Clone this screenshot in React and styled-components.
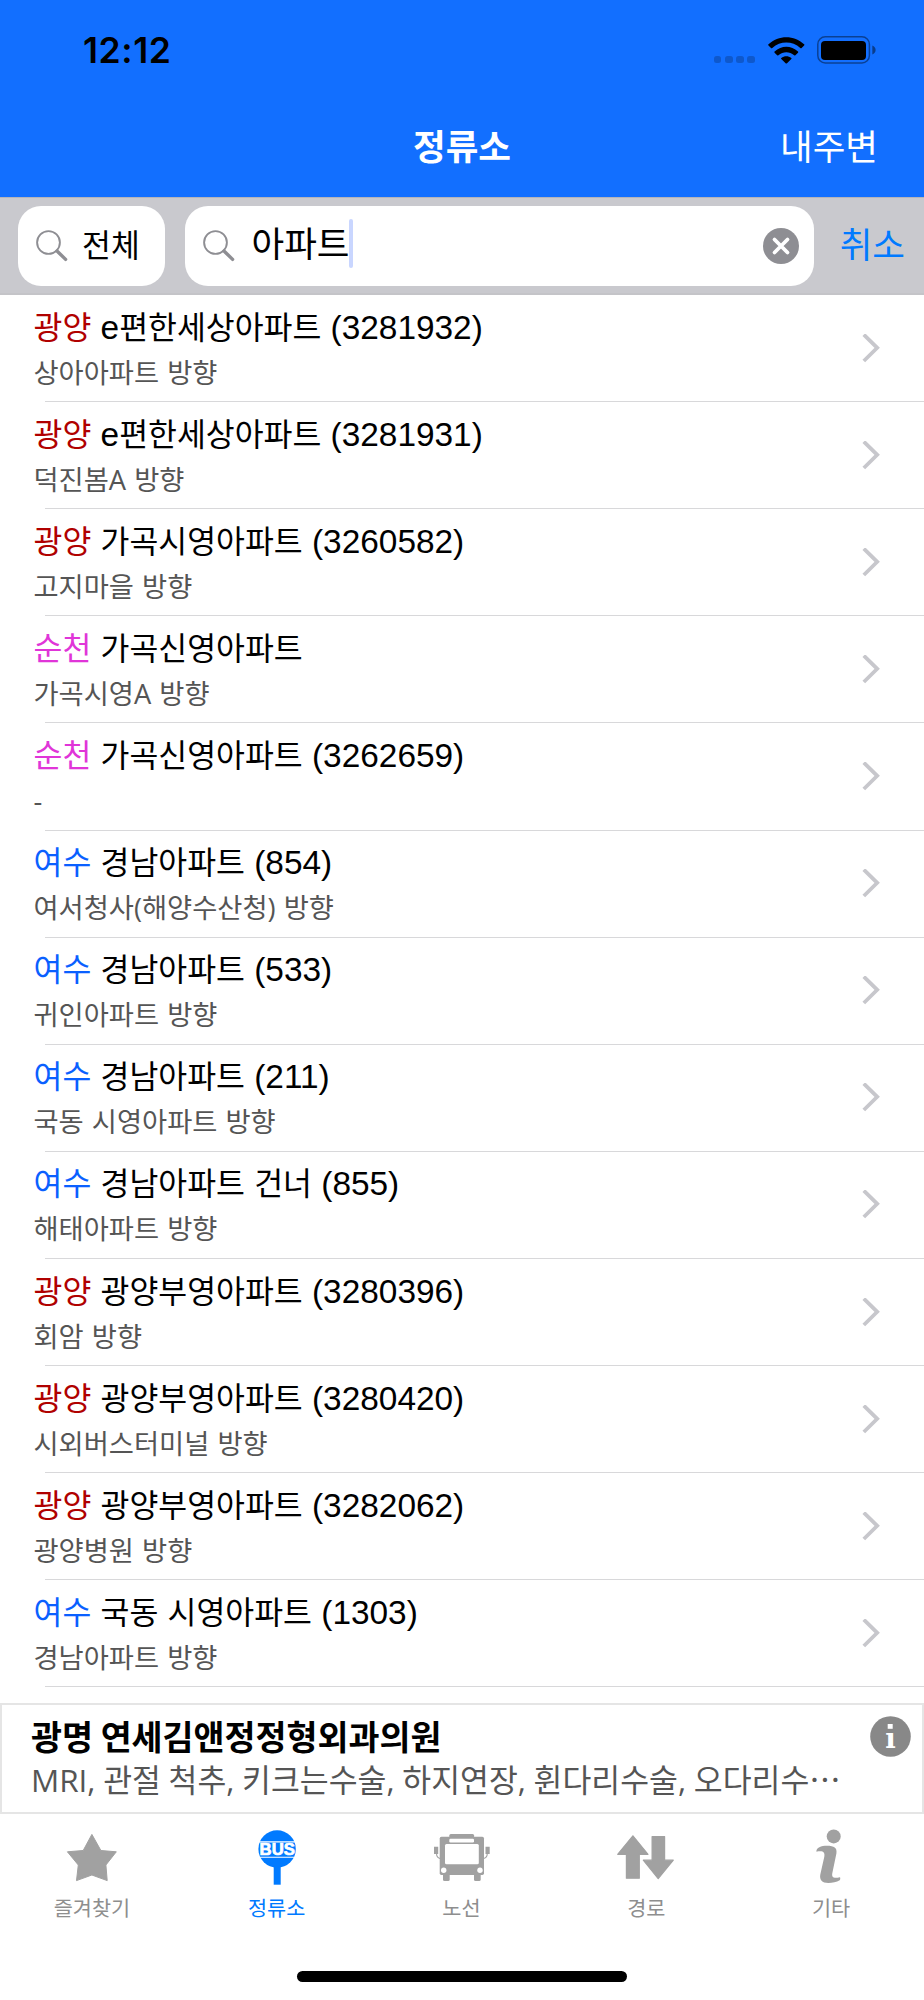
import React from 'react'
import styled, { createGlobalStyle } from 'styled-components'

const stops = [
  { city: '광양', name: 'e편한세상아파트 (3281932)', dir: '상아아파트 방향' },
  { city: '광양', name: 'e편한세상아파트 (3281931)', dir: '덕진봄A 방향' },
  { city: '광양', name: '가곡시영아파트 (3260582)', dir: '고지마을 방향' },
  { city: '순천', name: '가곡신영아파트', dir: '가곡시영A 방향' },
  { city: '순천', name: '가곡신영아파트 (3262659)', dir: '-' },
  { city: '여수', name: '경남아파트 (854)', dir: '여서청사(해양수산청) 방향' },
  { city: '여수', name: '경남아파트 (533)', dir: '귀인아파트 방향' },
  { city: '여수', name: '경남아파트 (211)', dir: '국동 시영아파트 방향' },
  { city: '여수', name: '경남아파트 건너 (855)', dir: '해태아파트 방향' },
  { city: '광양', name: '광양부영아파트 (3280396)', dir: '회암 방향' },
  { city: '광양', name: '광양부영아파트 (3280420)', dir: '시외버스터미널 방향' },
  { city: '광양', name: '광양부영아파트 (3282062)', dir: '광양병원 방향' },
  { city: '여수', name: '국동 시영아파트 (1303)', dir: '경남아파트 방향' },
]

const cityColors = {
  광양: '#b00000',
  순천: '#e035d8',
  여수: '#0a60ff',
}

// latin runs are set a little larger than the hangul around them
function Mixed({ text }) {
  return text
    .split(/([\x20-\x7e]+)/)
    .filter(Boolean)
    .map((part, i) =>
      /[\x20-\x7e]/.test(part) ? <Latin key={i}>{part}</Latin> : part
    )
}

function SearchIcon() {
  return (
    <svg width="32" height="32" viewBox="0 0 32 32" fill="none" stroke="#8e8e93">
      <circle cx="12.5" cy="12.5" r="11.4" strokeWidth="1.9" />
      <path d="M21 21l8.6 8.4" strokeWidth="3.4" strokeLinecap="round" />
    </svg>
  )
}

function StatusBar() {
  return (
    <Status>
      <Time>12:12</Time>
      <StatusIcons>
        <Dots><i /><i /><i /><i /></Dots>
        <svg width="37" height="27" viewBox="0 0 37 27">
          <path d="M.5 7.2C10.4-2.2 26.2-2.2 36.1 7.2q.7.6 0 1.3l-2.5 2.5q-.6.6-1.3 0c-8-7.2-20-7.2-28 0q-.7.6-1.3 0L.5 8.5q-.7-.7 0-1.3z" />
          <path d="M6.6 14.5c6.8-6.4 16.6-6.4 23.4 0q.6.6 0 1.2l-2.6 2.6q-.6.5-1.2 0c-4.6-4.1-11.2-4.1-15.8 0q-.6.5-1.2 0l-2.6-2.6q-.6-.6 0-1.2z" />
          <path d="M13.3 21c2.9-2.5 7.1-2.5 10 0q.6.6 0 1.1l-4.3 4.1q-.7.6-1.4 0l-4.3-4.1q-.6-.5 0-1.1z" />
        </svg>
        <svg width="59" height="28" viewBox="0 0 59 28">
          <rect x=".8" y=".8" width="51.6" height="26.2" rx="7.5" fill="none" stroke="#000" strokeOpacity=".42" strokeWidth="1.5" />
          <rect x="4" y="5" width="45" height="19" rx="4" />
          <path d="M55.3 9.5v9c2-.8 3.3-2.5 3.3-4.5s-1.3-3.7-3.3-4.5z" opacity=".45" />
        </svg>
      </StatusIcons>
    </Status>
  )
}

function StarIcon() {
  return (
    <path
      d="M29.9 9.4L38.9 25.5L54.3 26.8L43.9 40L45.2 55.6L29.9 50L14.5 55.6L16.3 40L5.4 26.8L21.2 25.5z"
      stroke="currentColor"
      strokeWidth="1"
      strokeLinejoin="round"
    />
  )
}

function StopIcon() {
  return (
    <>
      <circle cx="30.1" cy="24" r="18.7" />
      <path d="M26.7 40h7v19.7h-7z" />
      <path d="M11 16.9h38M11 32.3h38" stroke="#fff" strokeWidth="1.1" />
      <BusText x="12.6" y="30" textLength="35.2" lengthAdjust="spacingAndGlyphs">BUS</BusText>
    </>
  )
}

function BusIcon() {
  return (
    <>
      <rect x="17.3" y="9" width="24.8" height="8" rx="1.5" />
      <rect x="7.7" y="11.7" width="44.3" height="38.3" rx="1.7" />
      <rect x="11" y="46" width="6.7" height="10" rx="1.5" />
      <rect x="42" y="46" width="6.7" height="10" rx="1.5" />
      <rect x="17.3" y="13.7" width="24.7" height="3.7" rx="1.2" fill="#fff" />
      <rect x="13" y="19" width="33.8" height="20.3" rx="1.5" fill="#fff" />
      <circle cx="11.7" cy="45.3" r="2.7" fill="#fff" />
      <circle cx="48" cy="45.3" r="2.7" fill="#fff" />
      <path d="M2 21.7h4.2v7.3h-4.2zM53.5 21.7h4.2v7.3h-4.2z" />
      <path d="M4.6 29q0 3.5 3.5 4.5M55.2 29q0 3.5-3.5 4.5" fill="none" stroke="currentColor" strokeWidth="1.1" />
    </>
  )
}

function RouteIcon() {
  return (
    <path
      d="M15.9 10.8L31 29.3H22.3V53.2H9.4V29.3H.7zM35.1 11.6H47.6V35.2H56.3L41.2 53.6L26.3 35.2H35.1z"
      stroke="currentColor"
      strokeWidth="1.2"
      strokeLinejoin="round"
    />
  )
}

function EtcIcon() {
  return (
    <>
      <circle cx="31.7" cy="11.4" r="7" />
      <path d="M14.4 26.7C14.2 22.5 19 20.7 25.1 20.7C32 20.7 35.4 22.5 34.4 28.5L30.3 48.3C29.6 52.2 31.5 53.8 37.8 52.3C38.4 52.2 38.5 54.5 37.7 55.3C34.5 57.3 30.5 58 26.4 58C20 58 17.3 54.6 18.3 49.5L22.3 31.7C23 27.5 21.5 25.4 14.4 26.7z" />
    </>
  )
}

const tabs = [
  { label: '즐겨찾기', Icon: StarIcon },
  { label: '정류소', Icon: StopIcon, active: true },
  { label: '노선', Icon: BusIcon },
  { label: '경로', Icon: RouteIcon },
  { label: '기타', Icon: EtcIcon },
]

function App() {
  return (
    <Page>
      <GlobalStyle />
      <Header>
        <StatusBar />
        <NavBar>
          <NavTitle>정류소</NavTitle>
          <NavAction>내주변</NavAction>
        </NavBar>
      </Header>
      <SearchBar>
        <Scope>
          <SearchIcon />
          <span>전체</span>
        </Scope>
        <SearchField>
          <SearchIcon />
          <span>아파트</span>
          <Caret />
          <svg width="36" height="36" viewBox="0 0 36 36">
            <circle cx="18" cy="18" r="18" fill="#8e8e93" />
            <path d="M11.5 11.5l13 13M24.5 11.5l-13 13" stroke="#fff" strokeWidth="3.8" strokeLinecap="round" />
          </svg>
        </SearchField>
        <Cancel>취소</Cancel>
      </SearchBar>
      <List>
        {stops.map((stop, i) => (
          <Row key={i}>
            <div>
              <Name>
                <City $city={stop.city}>{stop.city}</City>
                <Mixed text={' ' + stop.name} />
              </Name>
              <Direction>{stop.dir}</Direction>
            </div>
            <svg width="18" height="30" viewBox="0 0 18 30" fill="none" stroke="#c7c7cc" strokeWidth="3.8">
              <path d="M1.8 .6L15.2 13.8L1.8 27" />
            </svg>
          </Row>
        ))}
      </List>
      <Ad>
        <AdTitle>광명 연세김앤정정형외과의원</AdTitle>
        <AdText>MRI, 관절 척추, 키크는수술, 하지연장, 휜다리수술, 오다리수<b>⋯</b></AdText>
        <AdInfo width="41" height="41" viewBox="0 0 41 41">
          <circle cx="20.5" cy="20.5" r="20.3" fill="#888" />
          <rect x="17.7" y="8" width="5" height="4.8" />
          <text x="15.2" y="32" textLength="10.5" lengthAdjust="spacingAndGlyphs">ı</text>
        </AdInfo>
      </Ad>
      <TabBar>
        {tabs.map(({ label, Icon, active }) => (
          <Tab key={label} $active={active}>
            <svg width="60" height="60" viewBox="0 0 60 60" fill="currentColor">
              <Icon />
            </svg>
            <span>{label}</span>
          </Tab>
        ))}
      </TabBar>
      <HomeIndicator />
    </Page>
  )
}

export default App

const GlobalStyle = createGlobalStyle`
  * {
    box-sizing: border-box;
  }
  body {
    margin: 0;
    background: #fff;
  }
`
const Page = styled.div`
  width: 924px;
  height: 2000px;
  display: flex;
  flex-direction: column;
  overflow: hidden;
  background: #fff;
  color: #000;
  font-family: 'Noto Sans CJK KR', sans-serif;
  white-space: nowrap;
  svg {
    display: block;
    flex-shrink: 0;
  }
`
const Header = styled.div`
  height: 197px;
  flex-shrink: 0;
  background: #126fff;
`
const Status = styled.div`
  height: 100px;
  padding: 0 48px 0 83px;
  display: flex;
  justify-content: space-between;
  align-items: center;
`
const Time = styled.div`
  padding-top: 1px;
  font-family: Inter, sans-serif;
  font-size: 35.5px;
  font-weight: 600;
  letter-spacing: 0.6px;
  line-height: 40px;
`
const StatusIcons = styled.div`
  display: flex;
  align-items: center;
`
const Dots = styled.div`
  display: flex;
  gap: 3.4px;
  margin: 19px 12.5px 0 0;
  i {
    width: 7.8px;
    height: 7.8px;
    border-radius: 2.5px;
    background: rgba(0, 0, 0, 0.2);
  }
  & + svg {
    margin-right: 12.5px;
  }
`
const NavBar = styled.div`
  height: 89px;
  padding: 0 46px;
  display: grid;
  grid-template-columns: 1fr auto 1fr;
  align-items: center;
  color: #fff;
  line-height: 50px;
`
const NavTitle = styled.div`
  grid-column: 2;
  font-size: 35.5px;
  font-weight: 600;
`
const NavAction = styled.div`
  text-align: right;
  font-size: 35.5px;
`
const SearchBar = styled.div`
  height: 98px;
  flex-shrink: 0;
  padding: 7.5px 19px 7.5px 18px;
  display: flex;
  align-items: stretch;
  background: #c9c9ce;
  border-top: 1px solid #b4b4ba;
  border-bottom: 2px solid #c4c4c8;
`
const Scope = styled.div`
  width: 147px;
  padding-left: 18px;
  display: flex;
  align-items: center;
  border-radius: 23px;
  background: #fff;
  font-size: 31.4px;
  line-height: 40px;
  span {
    margin-left: 14px;
    padding-bottom: 4px;
  }
`
const SearchField = styled.div`
  width: 629px;
  margin-left: 20px;
  padding: 0 15px 0 18px;
  display: flex;
  align-items: center;
  border-radius: 23px;
  background: #fff;
  font-size: 35.5px;
  line-height: 40px;
  span {
    margin-left: 16.5px;
    padding-bottom: 7px;
  }
  svg:last-child {
    margin-left: auto;
  }
`
const Caret = styled.i`
  width: 4.5px;
  height: 49px;
  margin: 0 0 4px -0.5px;
  border-radius: 2px;
  background: #c9d6ff;
`
const Cancel = styled.div`
  margin-left: auto;
  padding-bottom: 6px;
  align-self: center;
  color: #007aff;
  font-size: 35.5px;
  line-height: 40px;
`
const List = styled.div`
  height: 1408.4px;
  flex-shrink: 0;
`
const Row = styled.div`
  height: 107.12px;
  padding: 0 44.5px 0 33.5px;
  display: flex;
  justify-content: space-between;
  align-items: center;
  background: linear-gradient(#d8d8da, #d8d8da) 45px 100% / 100% 1px no-repeat;
`
const Name = styled.div`
  height: 46px;
  line-height: 44px;
  font-size: 31.4px;
`
const Latin = styled.span`
  font-family: 'Liberation Sans', sans-serif;
  font-size: 33.4px;
  white-space: pre;
`
const City = styled.span`
  color: ${(props) => cityColors[props.$city]};
`
const Direction = styled.div`
  height: 44px;
  line-height: 46px;
  font-family: 'Open Sans', 'Noto Sans CJK KR', sans-serif;
  font-size: 27.3px;
  word-spacing: 1px;
  color: #555;
`
const Ad = styled.div`
  position: relative;
  height: 111px;
  flex-shrink: 0;
  padding: 8px 29px 0;
  border: 2px solid #e5e5e5;
`
const AdTitle = styled.div`
  font-size: 33.7px;
  font-weight: 700;
  line-height: 45px;
`
const AdText = styled.div`
  font-family: 'Open Sans', 'Noto Sans CJK KR', sans-serif;
  font-size: 31.4px;
  line-height: 42px;
  word-spacing: -0.5px;
  color: #555;
  b {
    font-family: 'Noto Sans CJK KR', sans-serif;
    font-weight: 400;
  }
`
const AdInfo = styled.svg`
  position: absolute;
  top: 11px;
  right: 11px;
  fill: #fff;
  font: bold 28px 'DejaVu Serif', serif;
`
const TabBar = styled.div`
  height: 156.6px;
  flex-shrink: 0;
  padding-top: 11px;
  display: grid;
  grid-template-columns: repeat(5, 1fr);
`
const Tab = styled.div`
  display: flex;
  flex-direction: column;
  align-items: center;
  color: ${(props) => (props.$active ? '#007aff' : '#a1a1a1')};
  span {
    margin: 6px 1px 0 0;
    font-size: 20.8px;
    line-height: 32px;
    color: ${(props) => (props.$active ? '#007aff' : '#8e8e8e')};
  }
`
const BusText = styled.text`
  fill: #fff;
  stroke: #fff;
  stroke-width: 0.7px;
  font: bold 16px 'Liberation Sans', sans-serif;
`
const HomeIndicator = styled.div`
  width: 330px;
  height: 11px;
  flex-shrink: 0;
  align-self: center;
  border-radius: 6px;
  background: #000;
`
